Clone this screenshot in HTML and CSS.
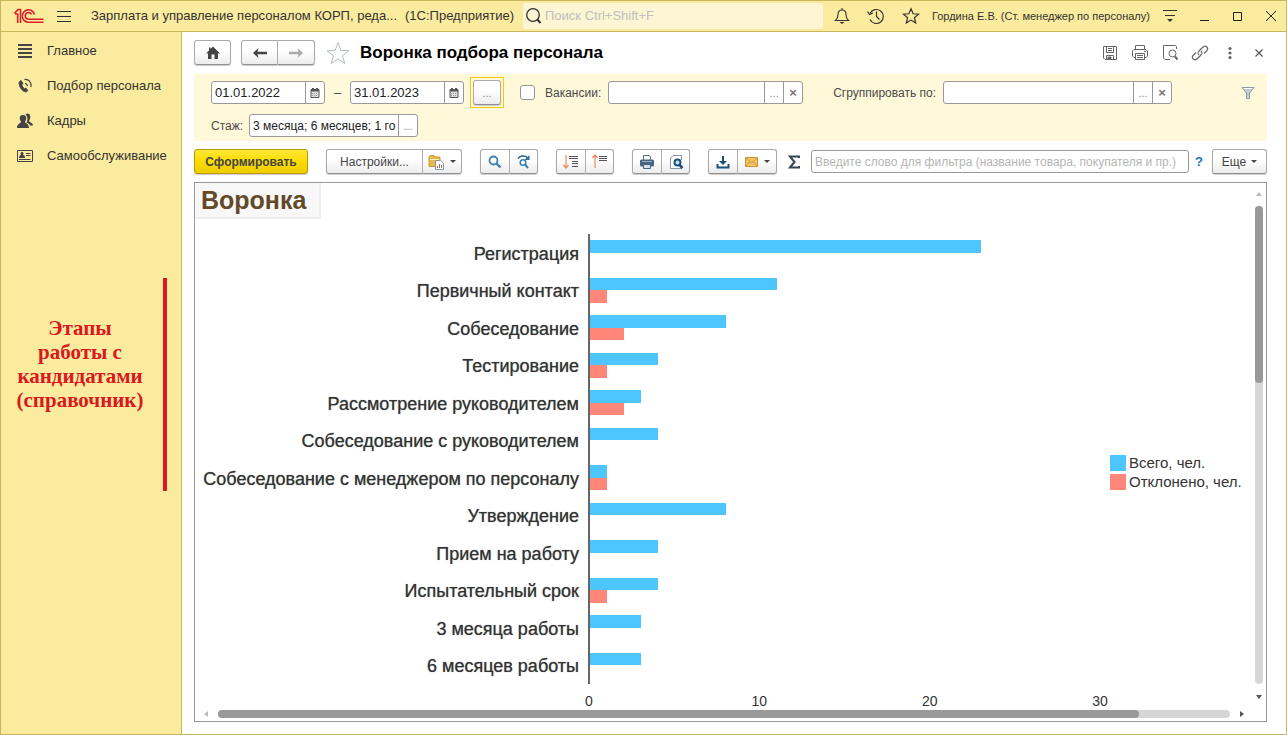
FILE: index.html
```html
<!DOCTYPE html>
<html lang="ru">
<head>
<meta charset="utf-8">
<title>Воронка подбора персонала</title>
<link rel="stylesheet" href="styles.css">
</head>
<body>
<div class="window">
  <header class="titlebar">
    <svg class="logo" width="30" height="16" viewBox="0 0 30 16" fill="none" stroke="#d9202a" stroke-width="1.600">
      <path d="M.500 5.500L4 1.500H6.500V15M1 6H3.700V15"/>
      <path d="M20.500 6.500A6.200 6.200 0 1 0 14.500 14.200H29.500M17.500 6.500A3.300 3.300 0 1 0 14.500 11.300H29.500"/>
    </svg>
    <button class="flat burger" aria-label="Меню"><svg width="16" height="14" viewBox="0 0 16 14" stroke="#333" fill="none"><path d="M1 2.500H15M1 7.500H15M1 12.500H15"/></svg></button>
    <span class="app-name">Зарплата и управление персоналом КОРП, реда...</span>
    <span class="app-kind">(1С:Предприятие)</span>
    <label class="search">
      <svg width="18" height="18" viewBox="0 0 18 18" fill="none" stroke="#333"><circle cx="8" cy="8" r="6.300" stroke-width="1.300"/><path d="M12.300 12.500L15.500 16" stroke-width="2"/></svg>
      <input type="text" placeholder="Поиск Ctrl+Shift+F" aria-label="Поиск">
    </label>
    <div class="title-tools">
      <button class="flat" aria-label="Уведомления"><svg width="16" height="18" viewBox="0 0 16 18" fill="none" stroke="#333" stroke-width="1.100"><path d="M8 1V3M1.500 13.500C3.500 11.500 4 10 4 7.500C4 4.500 5.500 3 8 3S12 4.500 12 7.500C12 10 12.500 11.500 14.500 13.500Z"/><path d="M5.500 15H10.500L8 17Z" fill="#333" stroke="none"/></svg></button>
      <button class="flat" aria-label="История"><svg width="18" height="18" viewBox="0 0 18 18" fill="none" stroke="#333" stroke-width="1.200"><path d="M3 6.500A7 7 0 1 1 3 12.500M9.500 4.500V9.500L12.500 12.500"/><path d="M.500 4.500L2.500 7.500L6 6"/></svg></button>
      <button class="flat" aria-label="Избранное"><svg width="18" height="18" viewBox="0 0 18 18" fill="none" stroke="#333" stroke-width="1.200"><path d="M9 1.800L11.100 6.800L16.500 7.200L12.400 10.700L13.700 16L9 13.100L4.300 16L5.600 10.700L1.500 7.200L6.900 6.800Z"/></svg></button>
    </div>
    <span class="user">Гордина Е.В. (Ст. менеджер по персоналу)</span>
    <div class="window-tools">
      <button class="flat" aria-label="Сервис"><svg width="16" height="14" viewBox="0 0 16 14" fill="none" stroke="#333"><path d="M1 1.500H15M3 6.500H13"/><path d="M5 10H11L8 13Z" fill="#333" stroke="none"/></svg></button>
      <button class="flat" aria-label="Свернуть"><svg width="12" height="12" viewBox="0 0 12 12" stroke="#222"><path d="M1 10.500H10"/></svg></button>
      <button class="flat" aria-label="Развернуть"><svg width="12" height="12" viewBox="0 0 12 12" fill="none" stroke="#222"><path d="M1.500 2.500H9.500V10.500H1.500Z"/></svg></button>
      <button class="flat" aria-label="Закрыть окно"><svg width="12" height="12" viewBox="0 0 12 12" stroke="#222"><path d="M1 1L11 11M11 1L1 11"/></svg></button>
    </div>
  </header>

  <div class="body">
    <aside class="sidebar">
      <nav>
        <a href="#"><svg width="16" height="16" viewBox="0 0 16 16" stroke="#444" stroke-width="2"><path d="M1 2H15M1 6H15M1 10H15M1 14H15"/></svg>Главное</a>
        <a href="#"><svg width="16" height="16" viewBox="0 0 16 16" fill="none" stroke="#444"><path d="M4 2.500L2.200 4C1.500 8 5 13.500 9 14L10.800 12.500L8.800 10L7.500 10.800C6 9.800 5 8 4.800 6.500L6 5.500Z" fill="#444"/><path d="M8 5.500C9.500 5.500 10.500 6.700 10.300 8.200M7.500 1.500C12 1 14.700 4.500 14 9" stroke-width="1.200"/></svg>Подбор персонала</a>
        <a href="#"><svg width="16" height="16" viewBox="0 0 16 16" fill="#444"><path d="M8.500 1.500C10-.300 13.500.500 13.300 4C13.200 6 12.500 7 12 8C12.500 9.500 16 9.500 16 12.500H13C12.500 10.500 10.500 10 9.500 9.500C10.800 7 11 3.500 8.500 1.500Z"/><path d="M6 2C8.500 2 9.500 3.500 9.200 5.800C9 7.500 8.300 8 8 9C8.500 10.500 12 10.500 12 15H0C0 10.500 3.500 10.500 4 9C3.700 8 3 7.500 2.800 5.800C2.500 3.500 3.500 2 6 2Z"/></svg>Кадры</a>
        <a href="#"><svg width="16" height="16" viewBox="0 0 16 16" fill="none" stroke="#444"><path d="M.500 2.500H15.500V13.500H.500Z"/><path d="M9 5.500H13.500M9 7.500H13.500M2 11.500H13.500"/><path d="M5 4A1.500 1.700 0 0 1 6 7C7 7.500 8 7.500 8 10H2C2 7.500 3 7.500 4 7A1.500 1.700 0 0 1 5 4Z" fill="#444" stroke="none"/></svg>Самообслуживание</a>
      </nav>
      <div class="note">
        <p>Этапы<br>работы с<br>кандидатами<br>(справочник)</p>
        <div class="note-line"></div>
      </div>
    </aside>

    <main class="main">
      <div class="page-head">
        <button class="btn home" aria-label="Домой"><svg width="16" height="14" viewBox="0 0 16 14" fill="#444"><path d="M8 .500L15 7.500H13V13H9.500V8.500H6.500V13H3V7.500H1L4 4.500V1.500H5.500V3Z"/></svg></button>
        <div class="group nav-group">
          <button class="btn" aria-label="Назад"><svg width="16" height="12" viewBox="0 0 16 12" fill="#444"><path d="M1 6L6.500 1L5.500 4.800H15V7.200H5.500L6.500 11Z"/></svg></button>
          <button class="btn" aria-label="Вперед"><svg width="16" height="12" viewBox="0 0 16 12" fill="#aaa"><path d="M15 6L9.500 1L10.500 4.800H1V7.200H10.500L9.500 11Z"/></svg></button>
        </div>
        <button class="flat" aria-label="В избранное"><svg width="24" height="24" viewBox="0 0 24 24" fill="#fff" stroke="#b4bcc4"><path d="M12 1.500L14.800 9.300L23 9.600L16.500 14.600L18.800 22.500L12 17.900L5.200 22.500L7.500 14.600L1 9.600L9.200 9.300Z"/></svg></button>
        <h1>Воронка подбора персонала</h1>
        <div class="page-tools">
          <button class="flat" aria-label="Сохранить"><svg width="16" height="16" viewBox="0 0 16 16" fill="none" stroke="#666"><path d="M1.500 1.500H14.500V14.500H3L1.500 13Z"/><path d="M4.500 1.500V7.500H11.500V1.500M6 3.500H10M6 5.500H10M4.500 14.500V10.500H11.500V14.500"/><path d="M6 12H9V14H6Z" fill="#666"/></svg></button>
          <button class="flat" aria-label="Печать"><svg width="18" height="16" viewBox="0 0 18 16" fill="none" stroke="#666"><path d="M4.500 4.500V.500H13.500V4.500M4.500 12.500H3L1.500 11V6L3 4.500H15L16.500 6V11L15 12.500H13.500"/><path d="M4.500 8.500H13.500V14.500H4.500ZM6 10.500H12M6 12.500H12M13 6.500H15"/></svg></button>
          <button class="flat" aria-label="Просмотр"><svg width="16" height="16" viewBox="0 0 16 16" fill="none" stroke="#666"><path d="M14.500 4V1.500L13.500.500H1.500V13L3 14.500H8"/><circle cx="10.500" cy="8.500" r="3.500"/><path d="M13 11.500L15.500 14.500" stroke-width="2"/></svg></button>
          <button class="flat" aria-label="Ссылка"><svg width="18" height="16" viewBox="0 0 18 16" fill="none" stroke="#666" stroke-width="1.200"><path d="M8 10C6 8 7 7 8.500 5.500L11.500 2.500C13 1 14.500 .700 15.800 2S16.500 5 15.500 6L13 8.500"/><path d="M10 6C12 8 11 9 9.500 10.500L6.500 13.500C5 15 3.500 15.300 2.200 14S1.500 11 2.500 10L5 7.500"/></svg></button>
          <button class="flat" aria-label="Дополнительно"><svg width="16" height="16" viewBox="0 0 16 16" fill="#666"><circle cx="8" cy="3.500" r="1.600"/><circle cx="8" cy="8" r="1.600"/><circle cx="8" cy="12.500" r="1.600"/></svg></button>
          <button class="flat" aria-label="Закрыть"><svg width="16" height="16" viewBox="0 0 16 16" stroke="#555" stroke-width="1.200"><path d="M4.500 4.500L11.500 11.500M11.500 4.500L4.500 11.500"/></svg></button>
        </div>
      </div>

      <section class="filters">
        <div class="filter-row">
          <span class="field date"><input type="text" value="01.01.2022" aria-label="Начало периода"><button aria-label="Выбрать дату начала"><svg width="10" height="10" viewBox="0 0 10 10"><path d="M1 1.500H9V9.500H1Z" fill="#ddd" stroke="#555"/><path d="M1 1H9V3.500H1ZM2 0H4V2H2ZM6 0H8V2H6Z" fill="#555"/><path d="M2 5.500H8M2 7.500H8" stroke="#999" stroke-dasharray="1 1"/></svg></button></span>
          <span class="dash">–</span>
          <span class="field date"><input type="text" value="31.01.2023" aria-label="Конец периода"><button aria-label="Выбрать дату конца"><svg width="10" height="10" viewBox="0 0 10 10"><path d="M1 1.500H9V9.500H1Z" fill="#ddd" stroke="#555"/><path d="M1 1H9V3.500H1ZM2 0H4V2H2ZM6 0H8V2H6Z" fill="#555"/><path d="M2 5.500H8M2 7.500H8" stroke="#999" stroke-dasharray="1 1"/></svg></button></span>
          <span class="focus-frame"><button class="btn period" aria-label="Выбрать период">...</button></span>
          <input class="check" type="checkbox" id="use-vacancies">
          <label class="vac-label" for="use-vacancies">Вакансии:</label>
          <span class="field vacancies"><input type="text" aria-label="Вакансии"><button aria-label="Выбрать вакансии">...</button><button class="x" aria-label="Очистить вакансии">×</button></span>
          <label class="group-label" for="group-by">Сгруппировать по:</label>
          <span class="field group-by"><input type="text" id="group-by"><button aria-label="Выбрать группировку">...</button><button class="x" aria-label="Очистить группировку">×</button></span>
          <button class="flat funnel" aria-label="Фильтр"><svg width="14" height="14" viewBox="0 0 14 14"><path d="M1 1.500H13L8.500 7V12.500H5.500V7Z" fill="#c3ccd6" stroke="#8c98a5"/><path d="M3 2.500H11" stroke="#fff"/></svg></button>
        </div>
        <div class="filter-row">
          <label class="exp-label" for="experience">Стаж:</label>
          <span class="field experience"><input type="text" id="experience" value="3 месяца; 6 месяцев; 1 го"><button aria-label="Выбрать стаж">...</button></span>
        </div>
      </section>

      <div class="toolbar">
        <button class="btn primary">Сформировать</button>
        <div class="group">
          <button class="btn settings">Настройки...</button>
          <button class="btn drop" aria-label="Варианты отчета"><svg width="17" height="16" viewBox="0 0 17 16"><path d="M1 3L2 1.500H6L7 3H12V12.500H1Z" fill="#e9b949" stroke="#c99a38"/><path d="M2 5.500H11" stroke="#fff2bf"/><path d="M7.500 6.500H12.500L15.500 9V15.500H7.500Z" fill="#fff" stroke="#8d9aa5"/><path d="M9.500 14V12M11.500 14V10" stroke="#e0555a"/><path d="M13.500 14V11" stroke="#4aa564"/></svg><i class="caret"></i></button>
        </div>
        <div class="group">
          <button class="btn icon" aria-label="Найти"><svg width="16" height="16" viewBox="0 0 16 16" fill="none" stroke="#3b82b5"><circle cx="6.500" cy="6.500" r="4" stroke-width="1.800"/><path d="M9.500 9.500L13.500 13.500" stroke-width="2.400"/></svg></button>
          <button class="btn icon" aria-label="Найти далее"><svg width="16" height="16" viewBox="0 0 16 16" fill="none" stroke="#3b82b5"><circle cx="7" cy="8.500" r="2.800" stroke-width="1.600"/><path d="M9 10.500L12 14" stroke-width="2"/><path d="M2 4.500C5 .800 9.500 1.500 12 4" stroke="#2d6d96" stroke-width="1.600"/><path d="M13.500 1V6H8.500Z" fill="#2d6d96" stroke="none"/></svg></button>
        </div>
        <div class="group">
          <button class="btn icon" aria-label="Развернуть группы"><svg width="16" height="16" viewBox="0 0 16 16" fill="none" stroke="#555"><path d="M3 1V14M.500 11L3 14L5.500 11" stroke="#f08858" stroke-width="1.200"/><path d="M6 2.500H15M6 4.500H15M9 7.500H15M9 9.500H15M9 12.500H15"/></svg></button>
          <button class="btn icon" aria-label="Свернуть группы"><svg width="16" height="16" viewBox="0 0 16 16" fill="none" stroke="#555"><path d="M3 14V1M.500 4L3 1L5.500 4" stroke="#f08858" stroke-width="1.200"/><path d="M7 2.500H15M7 4.500H15M7 6.500H15"/></svg></button>
        </div>
        <div class="group">
          <button class="btn icon" aria-label="Печать отчета"><svg width="16" height="16" viewBox="0 0 16 16"><path d="M4.500 6V1.500H10L11.500 3V6" fill="#fff" stroke="#526f88"/><rect x="1" y="5.500" width="14" height="7" rx="1.500" fill="#456580"/><path d="M3 7.500H13" stroke="#9db4c6"/><path d="M4.500 10.500H11.500V14.500H4.500Z" fill="#d6e2ec" stroke="#456580"/></svg></button>
          <button class="btn icon" aria-label="Предварительный просмотр"><svg width="16" height="16" viewBox="0 0 16 16" fill="none"><path d="M13.500 6V1.500H5L2.500 4V14.500H14" fill="#fff" stroke="#8794a0"/><circle cx="9.500" cy="8.500" r="3" fill="#c9e0f0" stroke="#1a5277" stroke-width="2"/><path d="M11.500 11L14.500 14" stroke="#1a5277" stroke-width="2.500"/></svg></button>
        </div>
        <div class="group">
          <button class="btn icon" aria-label="Сохранить отчет"><svg width="16" height="16" viewBox="0 0 16 16"><path d="M2.500 10V13.500H13.500V10" fill="none" stroke="#1a4f78" stroke-width="2"/><path d="M7 2H9V7H12L8 11L4 7H7Z" fill="#1a4f78"/></svg></button>
          <button class="btn drop" aria-label="Отправить по почте"><svg width="15" height="12" viewBox="0 0 15 12"><path d="M1.500 1.500H13.500V10.500H1.500Z" fill="#f3c565" stroke="#cf9433"/><path d="M2 2L7.500 7L13 2M2 10L5.500 6M13 10L9.500 6" fill="none" stroke="#cf9433"/></svg><i class="caret"></i></button>
        </div>
        <button class="flat sigma" aria-label="Сумма"><svg width="12" height="14" viewBox="0 0 12 14" fill="none" stroke="#37474f" stroke-width="2"><path d="M11 3V1.500H2L6.500 7L2 12.500H11V11"/></svg></button>
        <input class="word-filter" type="text" placeholder="Введите слово для фильтра (название товара, покупателя и пр.)" aria-label="Фильтр по слову">
        <button class="flat help">?</button>
        <button class="btn more">Еще<i class="caret"></i></button>
      </div>

      <section class="report">
        <h2>Воронка</h2>
        <div class="chart">
          <div class="rows">
            <div class="row"><span>Регистрация</span><div class="bars"><i class="total" style="width:76.67%"></i></div></div>
            <div class="row"><span>Первичный контакт</span><div class="bars"><i class="total" style="width:36.67%"></i><i class="rejected" style="width:3.33%"></i></div></div>
            <div class="row"><span>Собеседование</span><div class="bars"><i class="total" style="width:26.67%"></i><i class="rejected" style="width:6.67%"></i></div></div>
            <div class="row"><span>Тестирование</span><div class="bars"><i class="total" style="width:13.33%"></i><i class="rejected" style="width:3.33%"></i></div></div>
            <div class="row"><span>Рассмотрение руководителем</span><div class="bars"><i class="total" style="width:10%"></i><i class="rejected" style="width:6.67%"></i></div></div>
            <div class="row"><span>Собеседование с руководителем</span><div class="bars"><i class="total" style="width:13.33%"></i></div></div>
            <div class="row"><span>Собеседование с менеджером по персоналу</span><div class="bars"><i class="total" style="width:3.33%"></i><i class="rejected" style="width:3.33%"></i></div></div>
            <div class="row"><span>Утверждение</span><div class="bars"><i class="total" style="width:26.67%"></i></div></div>
            <div class="row"><span>Прием на работу</span><div class="bars"><i class="total" style="width:13.33%"></i></div></div>
            <div class="row"><span>Испытательный срок</span><div class="bars"><i class="total" style="width:13.33%"></i><i class="rejected" style="width:3.33%"></i></div></div>
            <div class="row"><span>3 месяца работы</span><div class="bars"><i class="total" style="width:10%"></i></div></div>
            <div class="row"><span>6 месяцев работы</span><div class="bars"><i class="total" style="width:10%"></i></div></div>
          </div>
          <div class="axis"><span>0</span><span>10</span><span>20</span><span>30</span></div>
          <ul class="legend">
            <li><i class="total"></i>Всего, чел.</li>
            <li><i class="rejected"></i>Отклонено, чел.</li>
          </ul>
        </div>
        <div class="vscroll"><i class="arrow up"></i><div class="track"><div class="thumb"></div></div><i class="arrow down"></i></div>
        <div class="hscroll"><i class="arrow left"></i><div class="track"><div class="thumb"></div></div><i class="arrow right"></i></div>
      </section>
    </main>
  </div>
</div>
</body>
</html>
```
FILE: styles.css
```css
* { box-sizing: border-box; }
body {
  margin: 0;
  font-family: "Liberation Sans", Arial, sans-serif;
  font-size: 13px;
  line-height: 16px;
  color: #333;
}
button, input { font: inherit; color: inherit; margin: 0; padding: 0; }
button { cursor: pointer; }
input { min-width: 0; }
svg { display: block; flex: none; }

.window {
  display: flex;
  flex-direction: column;
  height: 100vh;
  border: 1px solid #c8b560;
  background: #fff;
}
.flat {
  display: flex;
  align-items: center;
  justify-content: center;
  flex: none;
  border: 0;
  background: none;
}

/* Title bar */
.titlebar {
  display: flex;
  align-items: center;
  height: 31px;
  flex: none;
  padding: 0 9px 0 13px;
  background: #fbeb9e;
  border-bottom: 1px solid #c8b560;
}
.burger { margin-left: 12px; }
.app-name { margin-left: 19px; width: 314px; white-space: nowrap; }
.app-kind { width: 118px; white-space: nowrap; }
.search {
  display: flex;
  align-items: center;
  flex: 1;
  height: 26px;
  padding-left: 2px;
  gap: 2px;
  border-radius: 3px;
  background: #fdf5d3;
}
.search input { flex: 1; border: 0; outline: 0; background: none; }
.search input::placeholder { color: #bfbfbf; opacity: 1; }
.title-tools { display: flex; align-items: center; gap: 17px; padding: 0 12px 0 11px; }
.user { width: 230px; font-size: 11px; white-space: nowrap; }
.window-tools { display: flex; align-items: center; gap: 21px; }

/* Sidebar */
.body { display: flex; flex: 1; min-height: 0; }
.sidebar {
  flex: none;
  width: 181px;
  background: #fbeb9e;
  border-right: 1px solid #c8b560;
}
.sidebar nav { display: flex; flex-direction: column; padding-top: 1px; }
.sidebar a {
  display: flex;
  align-items: center;
  gap: 14px;
  height: 35px;
  padding-left: 16px;
  color: #333;
  text-decoration: none;
}
.note { display: flex; margin-top: 105px; padding-right: 14px; }
.note p {
  flex: 1;
  margin: 0;
  padding: 38px 4px 0 0;
  font: bold 21px/24px "Liberation Serif", "Times New Roman", serif;
  text-align: center;
  color: #d9181f;
}
.note-line { width: 4px; height: 213px; background: #d9181f; }

/* Main area */
.main {
  display: flex;
  flex-direction: column;
  flex: 1;
  min-width: 0;
  padding: 8px 19px 12px 12px;
}
.btn {
  display: flex;
  align-items: center;
  justify-content: center;
  height: 25px;
  border: 1px solid #aaa;
  border-bottom-color: #8f8f8f;
  border-radius: 3px;
  background: linear-gradient(#fff 40%, #ececec);
  box-shadow: 0 1px 1px #ccc;
  color: #444;
}
.group { display: flex; flex: none; }
.group .btn + .btn { border-left: 0; border-radius: 0 3px 3px 0; }
.group .btn:first-child { border-radius: 3px 0 0 3px; }

.page-head { display: flex; align-items: center; height: 25px; flex: none; }
.home { width: 37px; }
.nav-group { margin: 0 11px 0 10px; }
.nav-group .btn { width: 37px; }
h1 { margin: 0 0 0 10px; font-size: 17px; line-height: 24px; color: #000; white-space: nowrap; }
.page-tools { display: flex; align-items: center; gap: 13px; margin-left: auto; }

.filters {
  display: flex;
  flex-direction: column;
  gap: 6px;
  flex: none;
  margin-top: 9px;
  padding: 3px 12px 4px 17px;
  background: #fff9da;
}
.filter-row { display: flex; align-items: center; color: #4a4a4a; }
.filter-row label { font-size: 12px; }
.field {
  display: flex;
  height: 23px;
  border: 1px solid #999;
  border-radius: 3px;
  background: #fff;
  overflow: hidden;
}
.field input { flex: 1; width: 0; padding-left: 3px; border: 0; outline: 0; background: none; color: #222; }
.field button {
  display: flex;
  align-items: center;
  justify-content: center;
  width: 19px;
  flex: none;
  border: 0;
  border-left: 1px solid #999;
  background: none;
  color: #888;
  font-size: 11px;
}
.field .x { font-size: 13px; font-weight: bold; color: #777; }
.date { width: 114px; flex: none; }
.dash { width: 25px; text-align: center; }
.focus-frame { margin: 0 16px 0 6px; padding: 2px; border: 1px solid #f8c800; }
.period { width: 28px; color: #888; font-size: 11px; }
.check { appearance: none; width: 15px; height: 15px; flex: none; border: 1px solid #999; border-radius: 3px; background: #fff; }
.vac-label { width: 73px; padding-left: 10px; white-space: nowrap; }
.vacancies { flex: 195 1 0; }
.group-label { width: 140px; padding-left: 30px; white-space: nowrap; }
.group-by { flex: 229 1 0; }
.funnel { margin-left: 69px; }
.exp-label { width: 38px; }
.experience { width: 169px; }
.experience input { font-size: 12px; }

.toolbar { display: flex; align-items: center; gap: 18px; margin-top: 8px; flex: none; font-size: 12px; }
.primary {
  width: 114px;
  flex: none;
  font-weight: bold;
  border-color: #b59b00;
  background: linear-gradient(#ffe83a, #fbdc00 50%, #f0cc00);
}
.settings { width: 97px; }
.icon { width: 28px; }
.group .icon:first-child { width: 30px; }
.drop { width: 39px; gap: 5px; }
.caret { border: 3px solid transparent; border-top-color: #444; border-bottom: 0; }
.sigma { margin: 0 -7px; }
.word-filter { flex: 1; height: 23px; padding-left: 3px; border: 1px solid #999; border-radius: 3px; outline: 0; }
.word-filter::placeholder { color: #b5b5b5; opacity: 1; }
.help { margin: 0 -9px 0 -12px; font-size: 13px; font-weight: bold; color: #1674b8; }
.more { width: 55px; flex: none; gap: 5px; }

/* Report */
.report {
  display: grid;
  grid-template: 36px minmax(0, 1fr) 14px / minmax(0, 1fr) 15px;
  flex: 1;
  min-height: 0;
  margin-top: 8px;
  border: 1px solid #999;
}
h2 {
  justify-self: start;
  width: 126px;
  margin: 0;
  padding: 0 6px;
  font-size: 25px;
  line-height: 34px;
  color: #624a29;
  background: #f8f8f8;
  border: solid #eee;
  border-width: 0 2px 2px 0;
}
.chart {
  display: grid;
  grid-template: minmax(0, 1fr) 23px / 394px minmax(0, 1fr) 151px;
  padding-top: 15px;
}
.rows { display: grid; grid-column: 1 / 3; grid-template-rows: repeat(12, 1fr); }
.row { display: grid; grid-template-columns: 393px 1fr; min-height: 0; }
.row span {
  align-self: center;
  padding: 2px 9px 0 0;
  font-size: 18px;
  line-height: 24px;
  text-align: right;
  text-shadow: 0 0 1px #777;
  white-space: nowrap;
}
.bars { display: grid; grid-template-rows: 1fr 2fr 2fr 1fr; border-left: 2px solid #666; min-height: 0; }
.total { grid-row: 2; background: #4dc6ff; }
.rejected { grid-row: 3; background: #ff877a; }
.axis { display: flex; justify-content: space-between; grid-column: 2; grid-row: 2; padding-top: 9px; font-size: 14px; }
.axis span { display: flex; justify-content: center; width: 0; }
.legend {
  grid-column: 3;
  grid-row: 1 / 3;
  align-self: center;
  display: flex;
  flex-direction: column;
  gap: 3px;
  margin: 0;
  padding: 3px 0 0 10px;
  list-style: none;
  font-size: 15px;
}
.legend li { display: flex; gap: 3px; white-space: nowrap; }
.legend i { width: 16px; height: 16px; }

.vscroll { grid-column: 2; grid-row: 1 / 3; display: flex; flex-direction: column; align-items: center; padding: 9px 0 8px; }
.vscroll .track { flex: 1; width: 8px; margin: 10px 0 11px; border-radius: 4px; background: #d6d6d6; }
.vscroll .thumb { height: 37%; border-radius: 4px; background: #999; }
.hscroll { grid-column: 1 / 3; display: flex; align-items: center; padding: 0 22px 0 9px; }
.hscroll .track { flex: 1; height: 8px; margin: 0 10px; border-radius: 4px; background: #d6d6d6; }
.hscroll .thumb { width: 91%; height: 8px; border-radius: 4px; background: #999; }
.arrow { border: 3px solid transparent; }
.up { border-top: 0; border-bottom: 4px solid #bbb; }
.down { border-bottom: 0; border-top: 4px solid #555; }
.left { border-left: 0; border-right: 4px solid #bbb; }
.right { border-right: 0; border-left: 4px solid #555; }
```
